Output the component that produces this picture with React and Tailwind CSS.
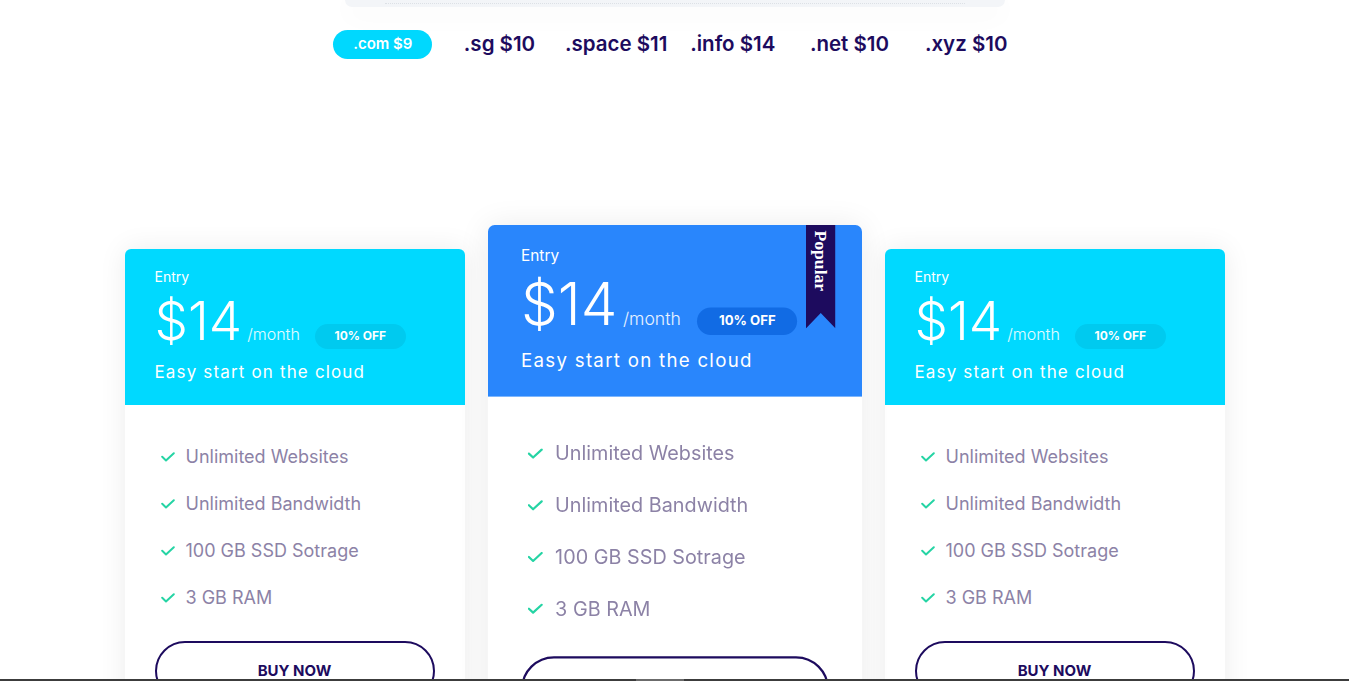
import React from "react";

const features = ["Unlimited Websites", "Unlimited Bandwidth", "100 GB SSD Sotrage", "3 GB RAM"];
const tlds = [".com $9", ".sg $10", ".space $11", ".info $14", ".net $10", ".xyz $10"];

function Check() {
  return (
    <svg width="14" height="10" viewBox="0 0 14 10" fill="none" className="shrink-0">
      <polyline points="1.2,4.8 5,8.4 12.8,1.2" stroke="#25d4a4" strokeWidth="2" strokeLinecap="round" strokeLinejoin="round" />
    </svg>
  );
}

function Card({ popular }) {
  return (
    <div
      className={
        "relative w-[340px] h-[480px] shrink-0 rounded-[6px] bg-white shadow-[0_0_28px_rgba(0,0,0,0.08)] overflow-hidden " +
        (popular ? "scale-110 z-10" : "")
      }
    >
      <div className={"h-[156px] px-[30px] pt-[18px] text-white " + (popular ? "bg-[#2986fc]" : "bg-[#00d9ff]")}>
        <div className="text-[14px] leading-[20px]">Entry</div>
        <div className="mt-[8px] flex items-baseline h-[52px]">
          <span className="text-[53px] leading-[52px] font-light">$14</span>
          <span className="ml-[5px] text-[16px] font-light text-white/90">/month</span>
          <span
            className={
              "ml-[15px] inline-flex h-[25px] w-[91px] items-center justify-center rounded-full text-[12px] font-bold " +
              (popular ? "bg-[#116be4]" : "bg-[#00caef]")
            }
          >
            10% OFF
          </span>
        </div>
        <div className="mt-[13px] text-[17px] leading-[24px] tracking-[0.068em]">Easy start on the cloud</div>
      </div>
      <ul className="pt-[38px] px-[36px] flex flex-col gap-5">
        {features.map((f) => (
          <li key={f} className="flex h-[27px] items-center gap-[11px] text-[18px] text-[#8c82a6]">
            <Check />
            <span>{f}</span>
          </li>
        ))}
      </ul>
      <div className="px-[30px] mt-[30px]">
        <button className="flex h-[60px] w-full items-center justify-center rounded-full border-2 border-[#1d0b5e] text-[15px] font-bold text-[#1d0b5e]">
          BUY NOW
        </button>
      </div>
      {popular && (
        <div className="absolute top-0 right-[24px] flex h-[94px] w-[27px] justify-center bg-[#1d0b5e] pt-[5px] [clip-path:polygon(0_0,100%_0,100%_100%,50%_85%,0_100%)]">
          <span className="[writing-mode:vertical-rl] font-['Liberation_Serif',serif] text-[16px] font-bold leading-[27px] text-white">
            Popular
          </span>
        </div>
      )}
    </div>
  );
}

export default function App() {
  return (
    <div className="relative h-[681px] overflow-hidden bg-white font-['Inter',sans-serif]">
      <div className="mx-auto h-[7px] w-[660px] rounded-b-[40px] bg-[#f3f5f8] shadow-[0_6px_28px_rgba(0,0,0,0.06)] pt-[3px] px-[40px]">
        <div className="border-t border-dotted border-[#dde1e6]"></div>
      </div>
      <div className="mx-auto mt-[23px] grid w-[700px] grid-cols-6 items-center">
        {tlds.map((t, i) =>
          i === 0 ? (
            <div key={t} className="flex justify-center">
              <span className="inline-flex h-[29px] w-[99px] items-center justify-center rounded-full bg-[#00d8fe] text-[15px] font-semibold text-white">
                {t}
              </span>
            </div>
          ) : (
            <div key={t} className="flex h-[29px] items-center justify-center text-[20.5px] font-semibold text-[#1d0b5e]">
              {t}
            </div>
          )
        )}
      </div>
      <div className="mx-auto mt-[190px] flex w-[1100px] items-start gap-10">
        <Card />
        <Card popular />
        <Card />
      </div>
      <div className="fixed bottom-0 left-0 right-0 z-50 h-[2px] bg-[#3c3c3c]">
        <div className="absolute left-[636px] top-0 h-[2px] w-[48px] bg-[#6b6b6b]"></div>
      </div>
    </div>
  );
}
